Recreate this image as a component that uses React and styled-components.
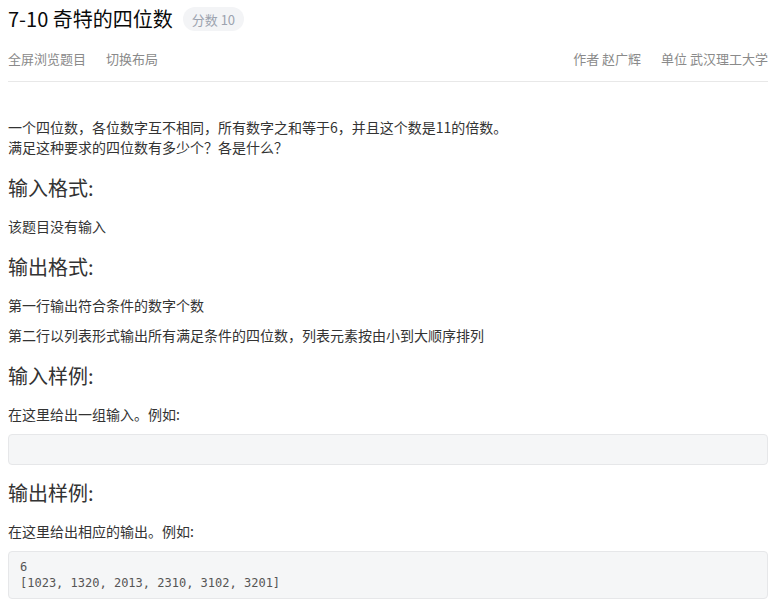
import React from 'react';
import styled, { createGlobalStyle } from 'styled-components';

const Global = createGlobalStyle`
  body {
    margin: 0;
    background: #fff;
    font-family: "Noto Sans CJK SC", "Noto Sans", sans-serif;
    color: #333;
  }
`;

const samples = [
  { title: '输入样例:', hint: '在这里给出一组输入。例如:', code: '' },
  { title: '输出样例:', hint: '在这里给出相应的输出。例如:', code: '6\n[1023, 1320, 2013, 2310, 3102, 3201]' },
];

const App = () => {
  return (
    <>
      <Global />
      <Page>
        <Header>
          <TitleRow>
            <Title>7-10 奇特的四位数</Title>
            <Badge>分数 10</Badge>
          </TitleRow>
          <SubNav>
            <Links>
              <NavLink>全屏浏览题目</NavLink>
              <NavLink>切换布局</NavLink>
            </Links>
            <Links>
              <NavLink>作者 赵广辉</NavLink>
              <NavLink>单位 武汉理工大学</NavLink>
            </Links>
          </SubNav>
        </Header>

        <Body>
          <Text>
            一个四位数，各位数字互不相同，所有数字之和等于6，并且这个数是11的倍数。
            <br />
            满足这种要求的四位数有多少个？各是什么？
          </Text>

          <Heading>输入格式:</Heading>
          <Text>该题目没有输入</Text>

          <Heading>输出格式:</Heading>
          <Text>第一行输出符合条件的数字个数</Text>
          <Text>第二行以列表形式输出所有满足条件的四位数，列表元素按由小到大顺序排列</Text>

          {samples.map((s) => (
            <React.Fragment key={s.title}>
              <Heading>{s.title}</Heading>
              <Text>{s.hint}</Text>
              <Code>{s.code}</Code>
            </React.Fragment>
          ))}
        </Body>
      </Page>
    </>
  );
};

const Page = styled.div`
  width: 760px;
  padding: 0 14px 0 8px;
`;

const Header = styled.header`
  border-bottom: 1px solid #e8e8e8;
  padding: 5px 0 12px;
`;

const TitleRow = styled.div`
  display: flex;
  align-items: center;
  gap: 10px;
  height: 28px;
`;

const Title = styled.h1`
  margin: 0;
  font-size: 20px;
  line-height: 28px;
  font-weight: 400;
  color: #0a0a0a;
`;

const Badge = styled.span`
  display: inline-flex;
  align-items: center;
  height: 24px;
  padding: 0 9px;
  border-radius: 12px;
  background: #f3f4f6;
  color: #9ca3af;
  font-size: 13px;
`;

const SubNav = styled.div`
  display: flex;
  justify-content: space-between;
  margin-top: 16px;
  line-height: 20px;
`;

const Links = styled.div`
  display: flex;
  gap: 20px;
`;

const NavLink = styled.span`
  font-size: 13px;
  color: #8a8a8a;
`;

const Body = styled.main`
  display: flex;
  flex-direction: column;
  padding-top: 35px;
`;

const Text = styled.p`
  margin: 0 0 10px;
  font-size: 14px;
  line-height: 20px;
  color: #333;
`;

const Heading = styled.h4`
  margin: 7px 0 14px;
  font-size: 20px;
  line-height: 28px;
  font-weight: 400;
  color: #333;
`;

const Code = styled.pre`
  margin: 0 0 7px;
  min-height: 15px;
  padding: 7px 11px;
  background: #f5f6f7;
  border: 1px solid #e6e7e9;
  border-radius: 4px;
  font-family: "DejaVu Sans Mono", "Liberation Mono", monospace;
  font-size: 12px;
  line-height: 16px;
  color: #555;
  white-space: pre;
`;

export default App;
